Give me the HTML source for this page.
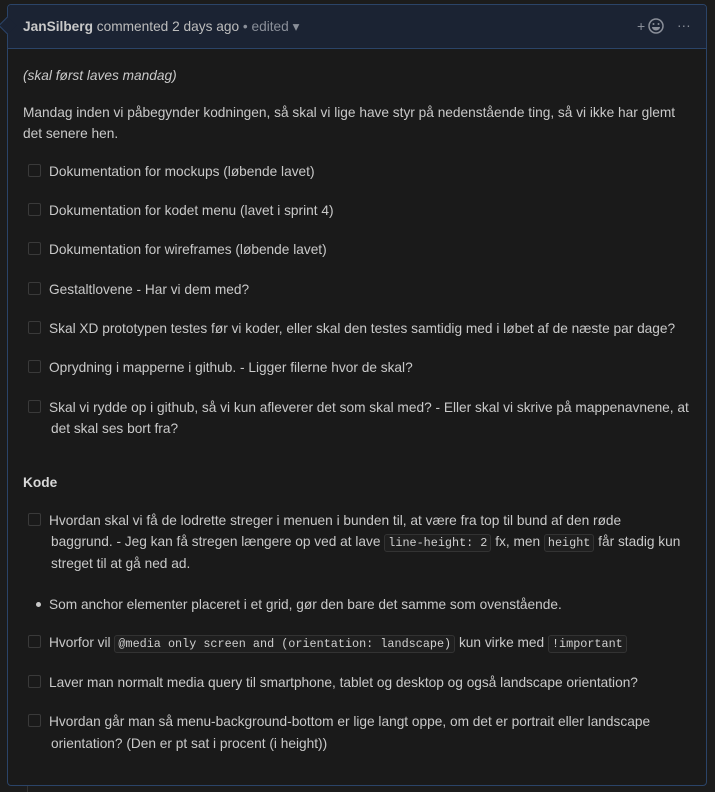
<!DOCTYPE html>
<html><head><meta charset="utf-8"><style>
html,body{margin:0;padding:0;width:715px;height:791px;overflow:hidden;background:#1c1c1c;}
body{font-family:"Liberation Sans",sans-serif;font-size:13.7px;color:#c9c9c9;}
.box{position:absolute;left:7px;top:4px;width:698px;height:780px;border:1px solid #2b4468;border-radius:4px;background:#1a1a1a;}
.hdr{position:absolute;left:0;top:0;right:0;height:43px;background:#1b2333;border-bottom:1px solid #2b4468;border-radius:3px 3px 0 0;}
.arrow{position:absolute;left:-7px;top:14px;width:12px;height:12px;background:#1b2333;border-left:1px solid #2b4468;border-bottom:1px solid #2b4468;transform:rotate(45deg);}
.t{position:absolute;white-space:nowrap;line-height:21px;}
.cb{position:absolute;left:21px;width:11px;height:11px;border:1px solid #3a3a3a;border-radius:2px;}
code{font-family:"Liberation Mono",monospace;font-size:11.8px;background:#1f1f1f;border:1px solid #333;border-radius:3px;padding:1px 3px;color:#d0d0d0;}
.line{position:absolute;left:27px;top:786px;width:1px;height:6px;background:#333;}
</style></head><body>
<div class="box">
 <div class="hdr"><div class="arrow"></div>
  <div class="t" style="left:15px;top:11px;color:#bdbdbd"><b style="color:#c8c8c8">JanSilberg</b> commented 2 days ago <span style="color:#8a8f99">• edited ▾</span></div>
  <div class="t" style="left:629px;top:11px;color:#8a8f99;font-size:14px">+</div>
  <svg style="position:absolute;left:640px;top:13px" width="16" height="16" viewBox="0 0 16 16"><circle cx="8" cy="8" r="7" fill="none" stroke="#8a8f99" stroke-width="1.5"/><circle cx="5.5" cy="6" r="1" fill="#8a8f99"/><circle cx="10.5" cy="6" r="1" fill="#8a8f99"/><path d="M4 9h8c0 2-2 3.5-4 3.5S4 11 4 9z" fill="#8a8f99"/></svg>
  <div class="t" style="left:669px;top:10px;color:#8a8f99">···</div>
 </div>
</div>
<div class="line"></div>
<div class="t" style="left:23px;top:65px;font-style:italic">(skal først laves mandag)</div>
<div class="t" style="left:23px;top:102px">Mandag inden vi påbegynder kodningen, så skal vi lige have styr på nedenstående ting, så vi ikke har glemt</div>
<div class="t" style="left:23px;top:123px">det senere hen.</div>

<div class="cb" style="top:164px;left:28px"></div><div class="t" style="left:49px;top:161px">Dokumentation for mockups (løbende lavet)</div>
<div class="cb" style="top:203px;left:28px"></div><div class="t" style="left:49px;top:200px">Dokumentation for kodet menu (lavet i sprint 4)</div>
<div class="cb" style="top:242px;left:28px"></div><div class="t" style="left:49px;top:239px">Dokumentation for wireframes (løbende lavet)</div>
<div class="cb" style="top:282px;left:28px"></div><div class="t" style="left:49px;top:279px">Gestaltlovene - Har vi dem med?</div>
<div class="cb" style="top:321px;left:28px"></div><div class="t" style="left:49px;top:318px">Skal XD prototypen testes før vi koder, eller skal den testes samtidig med i løbet af de næste par dage?</div>
<div class="cb" style="top:360px;left:28px"></div><div class="t" style="left:49px;top:357px">Oprydning i mapperne i github. - Ligger filerne hvor de skal?</div>
<div class="cb" style="top:400px;left:28px"></div><div class="t" style="left:49px;top:397px">Skal vi rydde op i github, så vi kun afleverer det som skal med? - Eller skal vi skrive på mappenavnene, at</div>
<div class="t" style="left:51px;top:418px">det skal ses bort fra?</div>

<div class="t" style="left:23px;top:472px;font-weight:bold;color:#d8d8d8">Kode</div>

<div class="cb" style="top:513px;left:28px"></div><div class="t" style="left:49px;top:510px">Hvordan skal vi få de lodrette streger i menuen i bunden til, at være fra top til bund af den røde</div>
<div class="t" style="left:51px;top:531px">baggrund. - Jeg kan få stregen længere op ved at lave <code>line-height: 2</code> fx, men <code>height</code> får stadig kun</div>
<div class="t" style="left:51px;top:553px">streget til at gå ned ad.</div>
<div style="position:absolute;left:36px;top:602px;width:5px;height:5px;border-radius:50%;background:#c9c9c9"></div>
<div class="t" style="left:49px;top:594px">Som anchor elementer placeret i et grid, gør den bare det samme som ovenstående.</div>
<div class="cb" style="top:635px;left:28px"></div><div class="t" style="left:49px;top:632px">Hvorfor vil <code>@media only screen and (orientation: landscape)</code> kun virke med <code>!important</code></div>
<div class="cb" style="top:675px;left:28px"></div><div class="t" style="left:49px;top:672px">Laver man normalt media query til smartphone, tablet og desktop og også landscape orientation?</div>
<div class="cb" style="top:714px;left:28px"></div><div class="t" style="left:49px;top:711px">Hvordan går man så menu-background-bottom er lige langt oppe, om det er portrait eller landscape</div>
<div class="t" style="left:51px;top:733px">orientation? (Den er pt sat i procent (i height))</div>
</body></html>
